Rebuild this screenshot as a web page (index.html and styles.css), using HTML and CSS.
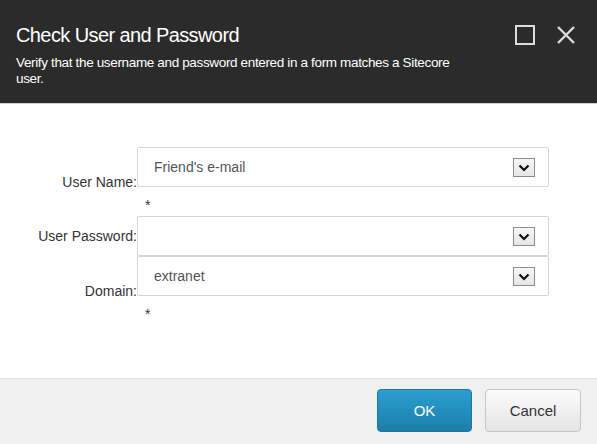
FILE: index.html
```html
<!DOCTYPE html>
<html>
<head>
<meta charset="utf-8">
<link rel="stylesheet" href="styles.css">
</head>
<body>
<div class="dialog">
  <header class="head">
    <div class="head-text">
      <h1 class="title">Check User and Password</h1>
      <p class="desc">Verify that the username and password entered in a form matches a Sitecore user.</p>
    </div>
    <div class="head-icons">
      <svg class="ico" width="20" height="20" viewBox="0 0 20 20"><rect x="1" y="1" width="18" height="18" fill="none" stroke="#dcdcdc" stroke-width="2"/></svg>
      <svg class="ico" width="20" height="20" viewBox="0 0 20 20"><path d="M2 2 L18 18 M18 2 L2 18" stroke="#dcdcdc" stroke-width="2.4" fill="none"/></svg>
    </div>
  </header>
  <main class="body">
    <div class="form">
      <div class="label">User Name:</div>
      <div class="field">
        <div class="select"><span class="val">Friend's e-mail</span><span class="dd"><svg width="12" height="8" viewBox="0 0 12 8"><path d="M1.5 1.5 L6 6 L10.5 1.5" fill="none" stroke="#111" stroke-width="2.2"/></svg></span></div>
        <div class="req">*</div>
      </div>
      <div class="label">User Password:</div>
      <div class="field">
        <div class="select"><span class="val"></span><span class="dd"><svg width="12" height="8" viewBox="0 0 12 8"><path d="M1.5 1.5 L6 6 L10.5 1.5" fill="none" stroke="#111" stroke-width="2.2"/></svg></span></div>
      </div>
      <div class="label">Domain:</div>
      <div class="field">
        <div class="select"><span class="val">extranet</span><span class="dd"><svg width="12" height="8" viewBox="0 0 12 8"><path d="M1.5 1.5 L6 6 L10.5 1.5" fill="none" stroke="#111" stroke-width="2.2"/></svg></span></div>
        <div class="req">*</div>
      </div>
    </div>
  </main>
  <footer class="foot">
    <button class="btn btn-ok">OK</button>
    <button class="btn btn-cancel">Cancel</button>
  </footer>
</div>
</body>
</html>
```
FILE: styles.css
```css
* { box-sizing: border-box; }
html, body { margin: 0; padding: 0; }
body {
  font-family: "Liberation Sans", Arial, sans-serif;
  background: #fff;
  width: 597px;
  height: 444px;
  overflow: hidden;
}
.dialog {
  display: flex;
  flex-direction: column;
  height: 444px;
}
.head {
  height: 104px;
  background: #2b2b2b;
  display: flex;
  justify-content: space-between;
  align-items: flex-start;
  padding: 23px 21px 0 16px;
  border-bottom: 1px solid #d0d0d0;
}
.head-text { width: 480px; }
.title {
  margin: 0;
  font-size: 20px;
  line-height: 24px;
  font-weight: normal;
  letter-spacing: -0.6px;
  color: #fff;
}
.desc {
  margin: 8px 0 0;
  width: 445px;
  font-size: 13.5px;
  line-height: 16px;
  letter-spacing: -0.35px;
  color: #fff;
}
.head-icons {
  display: flex;
  gap: 21px;
  padding-top: 2px;
}
.ico { display: block; }
.body {
  flex: 1;
  padding-top: 43px;
}
.form {
  display: grid;
  grid-template-columns: 137px 412px;
}
.label {
  align-self: center;
  text-align: right;
  font-size: 14px;
  line-height: 16px;
  color: #333;
}
.select {
  height: 40px;
  border: 1px solid #d6d6d6;
  border-radius: 2px;
  display: flex;
  justify-content: space-between;
  align-items: flex-start;
  padding: 10px 13px 0 16px;
}
.val {
  font-size: 14px;
  line-height: 16px;
  color: #555;
  padding-top: 1px;
}
.dd {
  width: 22px;
  height: 19px;
  border: 1px solid #8c8c8c;
  background: linear-gradient(#f7f7f7, #e6e6e6);
  display: flex;
  align-items: center;
  justify-content: center;
}
.dd svg { display: block; }
.req {
  height: 29px;
  padding: 10px 0 0 8px;
  font-size: 14px;
  line-height: 16px;
  color: #333;
}
.foot {
  height: 66px;
  background: #f0f0f0;
  border-top: 1px solid #e2e2e2;
  display: flex;
  justify-content: flex-end;
  gap: 13px;
  padding: 10px 16px 0 0;
}
.btn {
  height: 43px;
  border-radius: 4px;
  font-family: "Liberation Sans", Arial, sans-serif;
  font-size: 15px;
  cursor: pointer;
}
.btn-ok {
  width: 95px;
  color: #fff;
  background: linear-gradient(#2a9fd1, #1d7ea9);
  border: 1px solid #1a77a2;
}
.btn-cancel {
  width: 96px;
  color: #333;
  background: linear-gradient(#fbfbfb, #e5e5e5);
  border: 1px solid #c6c6c6;
}
```
